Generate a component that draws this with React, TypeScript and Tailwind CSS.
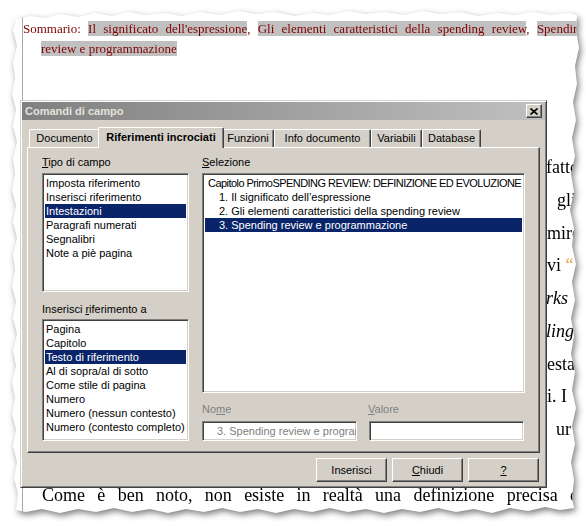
import React from 'react';

const sans = "font-['Liberation_Sans',Arial,sans-serif]";
const serif = "font-['Liberation_Serif','Times_New_Roman',serif]";

type Item = { label: string; indent?: boolean };

const tipoItems: Item[] = [
  { label: 'Imposta riferimento' },
  { label: 'Inserisci riferimento' },
  { label: 'Intestazioni' },
  { label: 'Paragrafi numerati' },
  { label: 'Segnalibri' },
  { label: 'Note a piè pagina' },
];

const selezioneItems: Item[] = [
  { label: 'Capitolo PrimoSPENDING REVIEW: DEFINIZIONE ED EVOLUZIONE' },
  { label: '1. Il significato dell\u2019espressione', indent: true },
  { label: '2. Gli elementi caratteristici della spending review', indent: true },
  { label: '3. Spending review e programmazione', indent: true },
];

const riferimentoItems: Item[] = [
  { label: 'Pagina' },
  { label: 'Capitolo' },
  { label: 'Testo di riferimento' },
  { label: 'Al di sopra/al di sotto' },
  { label: 'Come stile di pagina' },
  { label: 'Numero' },
  { label: 'Numero (nessun contesto)' },
  { label: 'Numero (contesto completo)' },
];

const tabs = [
  { label: 'Documento', w: 'w-[71px]' },
  { label: 'Riferimenti incrociati', w: 'w-[126px]', active: true },
  { label: 'Funzioni', w: 'w-[52px]' },
  { label: 'Info documento', w: 'w-[97px]' },
  { label: 'Variabili', w: 'w-[51px]' },
  { label: 'Database', w: 'w-[59px]' },
];

const sunken =
  'border border-t-[#808080] border-l-[#808080] border-r-white border-b-white shadow-[inset_1px_1px_0_#404040,inset_-1px_-1px_0_#d4d0c8]';
const raised =
  'border border-t-white border-l-white border-r-[#404040] border-b-[#404040] shadow-[inset_-1px_-1px_0_#808080]';

function ListBox({ items, selected, height, wide }: { items: Item[]; selected: number; height: string; wide?: boolean }) {
  return (
    <div className={`${sunken} ${height} bg-white pt-[2px] px-[2px] overflow-hidden`}>
      {items.map((it, i) => (
        <div
          key={it.label}
          className={`h-[14px] leading-[14px] whitespace-nowrap ${wide ? 'pl-[3px]' : 'pl-[1px]'} ${
            i === selected ? 'bg-[#0a246a] text-white' : 'text-black'
          } ${it.label.startsWith('Capitolo P') ? 'tracking-[-0.55px]' : ''}`}
        >
          {it.indent ? <span className="pl-[11px]">{it.label}</span> : it.label}
        </div>
      ))}
    </div>
  );
}

function Btn({ children }: { children: React.ReactNode }) {
  return (
    <button className={`${raised} w-[71px] h-[24px] bg-[#d4d0c8] flex items-center justify-center text-black`}>
      {children}
    </button>
  );
}

function Dialog() {
  return (
    <div
      className={`${sans} absolute left-[20px] top-[100px] w-[527px] h-[388px] bg-[#d4d0c8] text-[11px] text-black border border-t-[#d4d0c8] border-l-[#d4d0c8] border-r-[#404040] border-b-[#404040] shadow-[inset_1px_1px_0_#ffffff,inset_-1px_-1px_0_#808080] p-[1px] flex flex-col`}
    >
      {/* title bar (inactive) */}
      <div className="h-[18px] flex items-center justify-between bg-linear-to-r from-[#808080] to-[#c0c0c0] pl-[3px] pr-[3px]">
        <span className="font-bold text-[#e4e2dc] leading-none">Comandi di campo</span>
        <div className={`${raised} w-[16px] h-[14px] bg-[#d4d0c8] flex items-center justify-center`}>
          <svg width="8" height="7" viewBox="0 0 8 7">
            <path d="M0.5 0.5 L7.5 6.5 M7.5 0.5 L0.5 6.5" stroke="#000" strokeWidth="1.6" />
          </svg>
        </div>
      </div>

      <div className="px-[5px] pt-[7px] flex flex-col">
        {/* tabs */}
        <div className="h-[21px] -mb-px relative z-10 flex items-end pl-[2px]">
          {tabs.map((t) =>
            t.active ? (
              <div
                key={t.label}
                className={`${t.w} -mx-[2px] h-[21px] relative z-10 bg-[#d4d0c8] border-l border-t border-r border-l-white border-t-white border-r-[#404040] shadow-[inset_-1px_0_0_#808080] rounded-t-[2px] flex items-center justify-center font-bold pb-[2px]`}
              >
                {t.label}
              </div>
            ) : (
              <div
                key={t.label}
                className={`${t.w} h-[18px] mb-px bg-[#d4d0c8] border-l border-t border-r border-l-white border-t-white border-r-[#404040] shadow-[inset_-1px_0_0_#808080] rounded-t-[2px] flex items-center justify-center`}
              >
                {t.label}
              </div>
            )
          )}
        </div>

        {/* tab page */}
        <div className={`${raised} h-[306px] pt-[7px] px-[14px] flex gap-[13px]`}>
          <div className="w-[147px] flex flex-col">
            <div className="h-[14px] leading-[14px]">
              <u>T</u>ipo di campo
            </div>
            <div className="mt-[4px]">
              <ListBox items={tipoItems} selected={2} height="h-[119px]" />
            </div>
            <div className="mt-[10px] h-[14px] leading-[14px]">
              Inserisci <u>r</u>iferimento a
            </div>
            <div className="mt-[3px]">
              <ListBox items={riferimentoItems} selected={2} height="h-[122px]" />
            </div>
          </div>

          <div className="w-[323px] flex flex-col">
            <div className="h-[14px] leading-[14px]">
              <u>S</u>elezione
            </div>
            <div className="mt-[4px]">
              <ListBox items={selezioneItems} selected={3} height="h-[220px]" wide />
            </div>
            <div className="mt-[9px] h-[14px] leading-[14px] flex gap-[11px] text-[#808080]">
              <span className="w-[155px]">
                No<u>m</u>e
              </span>
              <span>
                <u>V</u>alore
              </span>
            </div>
            <div className="mt-[5px] flex gap-[12px]">
              <div className={`${sunken} w-[155px] h-[20px] bg-white pl-[14px] flex items-center overflow-hidden whitespace-nowrap text-[#808080]`}>
                3. Spending review e programmazione
              </div>
              <div className={`${sunken} w-[155px] h-[20px] bg-white`} />
            </div>
          </div>
        </div>

        {/* buttons */}
        <div className="mt-[5px] flex justify-end gap-[5px] pr-[1px]">
          <Btn>Inserisci</Btn>
          <Btn>
            <u>C</u>hiudi
          </Btn>
          <Btn>
            <u>?</u>
          </Btn>
        </div>
      </div>
    </div>
  );
}

const fragments: { pl: string; node: React.ReactNode }[] = [
  { pl: 'pl-[523px]', node: 'fatto' },
  { pl: 'pl-[534px]', node: 'gli' },
  { pl: 'pl-[524px]', node: 'mire' },
  { pl: 'pl-[524px]', node: <>vi <span className="text-[#e8a33d]">{'\u201c'}</span></> },
  { pl: 'pl-[523px]', node: <i>rks</i> },
  { pl: 'pl-[523px]', node: <i>ling</i> },
  { pl: 'pl-[524px]', node: 'esta' },
  { pl: 'pl-[524px]', node: 'i. I' },
  { pl: 'pl-[533px]', node: 'ur' },
];

export default function App() {
  return (
    <div className="relative w-[586px] h-[526px] bg-white overflow-hidden">
      {/* torn page */}
      <div className="h-full drop-shadow-[2px_3px_3px_rgba(0,0,0,0.5)]">
        <div className="h-full bg-white [clip-path:polygon(16px_19px,30px_16px,45px_18px,60px_14px,78px_17px,95px_13px,112px_16px,128px_12px,146px_15px,165px_13px,182px_16px,200px_12px,220px_15px,238px_11px,256px_14px,275px_12px,295px_16px,312px_13px,330px_15px,348px_11px,366px_14px,385px_12px,404px_15px,422px_11px,440px_14px,460px_12px,478px_16px,497px_13px,515px_15px,533px_12px,552px_15px,568px_13px,577px_15px,576px_30px,579px_48px,575px_66px,577px_84px,573px_102px,576px_120px,572px_138px,575px_156px,571px_174px,574px_192px,570px_210px,574px_228px,572px_246px,576px_264px,572px_282px,575px_300px,571px_318px,574px_336px,571px_354px,575px_372px,572px_390px,576px_408px,572px_426px,575px_444px,571px_462px,574px_480px,572px_498px,574px_508px,560px_510px,545px_507px,528px_511px,510px_508px,492px_513px,474px_509px,456px_512px,438px_508px,420px_512px,402px_509px,384px_513px,366px_509px,348px_512px,330px_508px,312px_512px,294px_509px,276px_513px,258px_509px,240px_512px,222px_508px,204px_512px,186px_509px,168px_513px,150px_509px,132px_512px,114px_508px,96px_512px,78px_509px,60px_513px,42px_509px,26px_512px,16px_510px,18px_494px,14px_478px,17px_462px,13px_446px,16px_430px,12px_414px,15px_398px,12px_382px,16px_366px,13px_350px,17px_334px,13px_318px,16px_302px,12px_286px,15px_270px,13px_254px,17px_238px,13px_222px,16px_206px,12px_190px,15px_174px,13px_158px,17px_142px,13px_126px,16px_110px,12px_94px,15px_78px,13px_62px,17px_46px,13px_30px)]">
          <div className={`${serif} ml-[22px] h-full border-l border-[#a8a8a8] pt-[19px] text-black`}>
            <div className="w-[563px] h-[20px] leading-[20px] text-[13px] text-[#800000] text-justify [text-align-last:justify] whitespace-normal">
              Sommario: <span className="bg-[#c0c0c0]">Il significato dell'espressione</span>,{' '}
              <span className="bg-[#c0c0c0]">Gli elementi caratteristici della spending review</span>,{' '}
              <span className="bg-[#c0c0c0]">Spending</span>
            </div>
            <div className="pl-[18px] h-[20px] leading-[20px] text-[13px] text-[#800000]">
              <span className="bg-[#c0c0c0]">review e programmazione</span>
            </div>

            <div className="mt-[92px] text-[18px] leading-[32.75px]">
              {fragments.map((f, i) => (
                <div key={i} className={`${f.pl} h-[32.75px] whitespace-nowrap`}>
                  {f.node}
                </div>
              ))}
              <div className="h-[32.75px]" />
              <div className="pl-[19px] w-[561px] h-[32.75px] text-justify [text-align-last:justify]">
                Come è ben noto, non esiste in realtà una definizione precisa di
              </div>
            </div>
          </div>
        </div>
      </div>

      <Dialog />
    </div>
  );
}
